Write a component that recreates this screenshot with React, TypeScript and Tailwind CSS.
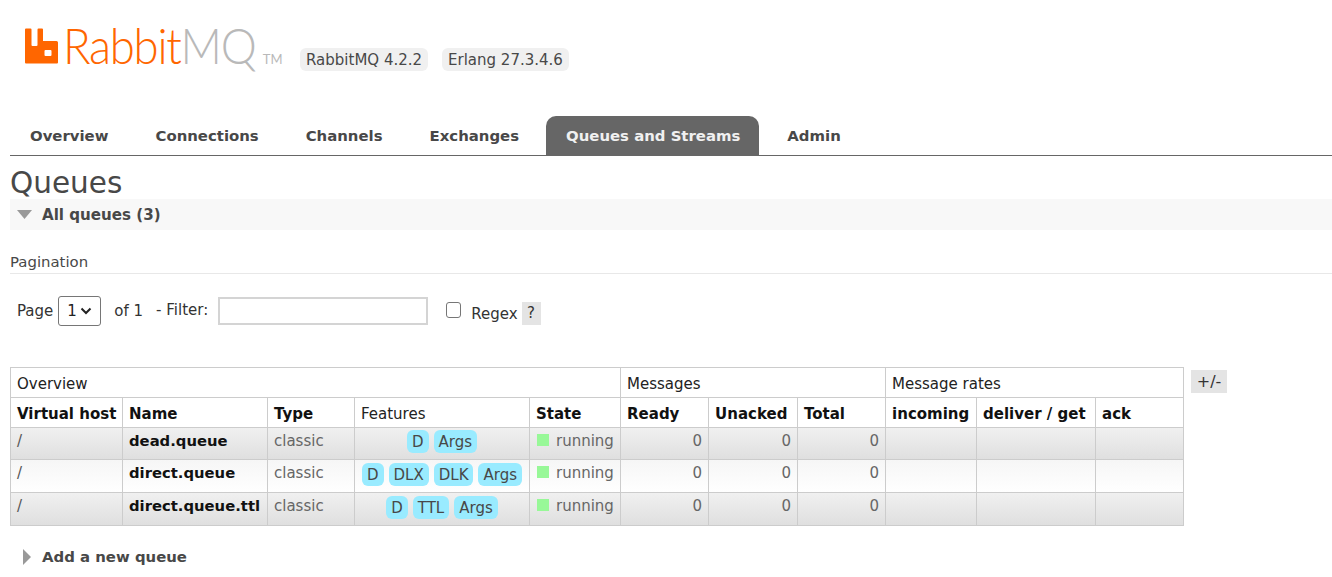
const F = "font-['DejaVu_Sans',Verdana,sans-serif]";

function Logo() {
  return (
    <div className="flex w-[300px] shrink-0 items-start">
      <svg width="33" height="36" viewBox="0 0 33 36" className="mt-[28px] ml-[25px]">
        <path fill="#ff6600" fillRule="evenodd" d="M1 .5h4.5a1 1 0 0 1 1 1V17a1 1 0 0 0 1 1h4a1 1 0 0 0 1-1V1.5a1 1 0 0 1 1-1H17a1 1 0 0 1 1 1V13h13.5a1.5 1.5 0 0 1 1.5 1.5V34.5a1 1 0 0 1-1 1H1a1 1 0 0 1-1-1V1.5a1 1 0 0 1 1-1zM20.5 22a1 1 0 0 0-1 1v4a1 1 0 0 0 1 1h5a1 1 0 0 0 1-1v-4a1 1 0 0 0-1-1z" />
      </svg>
      <div className="ml-[5px] mt-[17px] flex h-[56px] origin-left scale-x-[0.93] items-baseline font-['Lato',sans-serif] text-[49px] leading-[56px] font-light tracking-[-1.4px] whitespace-nowrap">
        <span className="text-[#ff6600]">Rabbit</span>
        <span className="text-[#b9b9b9]">MQ</span>
        <span className="ml-[8px] text-[14px] font-normal tracking-normal text-[#b9b9b9]">TM</span>
      </div>
    </div>
  );
}

function Pill({ children }: { children: React.ReactNode }) {
  return <span className="h-[23px] rounded-[6px] bg-[#f0f0f0] px-[6px] pt-[1px] text-[15px] leading-[22px] text-[#484848]">{children}</span>;
}

function Tab({ label, active, className = "" }: { label: string; active?: boolean; className?: string }) {
  return (
    <div className={`flex h-[39px] items-center rounded-t-[10px] pt-[1px] pl-[20px] text-[14.9px] font-bold ${active ? "bg-[#666666] pr-[19px] text-[#f0f0f0]" : "pr-[20px] text-[#484848]"} ${className}`}>
      {label}
    </div>
  );
}

function Tag({ children }: { children: React.ReactNode }) {
  return <span className="inline-block h-[23px] rounded-[6px] bg-[#99ebff] px-[5px] pt-[1px] text-[15px] leading-[22px] text-[#484848]">{children}</span>;
}

const widths = [112, 145, 87, 175, 91, 88, 89, 88, 91, 119, 88];
const heads = ["Virtual host", "Name", "Type", "Features", "State", "Ready", "Unacked", "Total", "incoming", "deliver / get", "ack"];
const rows = [
  { name: "dead.queue", tags: ["D", "Args"], h: "h-[32px]", odd: true, pad: "pt-[2px]" },
  { name: "direct.queue", tags: ["D", "DLX", "DLK", "Args"], h: "h-[33px]", odd: false, pad: "pt-[3px]" },
  { name: "direct.queue.ttl", tags: ["D", "TTL", "Args"], h: "h-[33px]", odd: true, pad: "pt-[3px]" },
];
const cell = "border border-[#cccccc] px-[6px]";
const body = `${cell} align-top pt-[2px]`;

export default function App() {
  return (
    <div className={`${F} h-[577px] w-[1332px] overflow-hidden bg-white text-[15px] text-[#484848]`}>
      <div className="flex h-[116px] items-start">
        <Logo />
        <div className="mt-[48px] flex gap-[14px]">
          <Pill>RabbitMQ 4.2.2</Pill>
          <Pill>Erlang 27.3.4.6</Pill>
        </div>
      </div>
      <div className="ml-[10px] flex h-[40px] border-b border-[#666666]">
        <Tab label="Overview" />
        <Tab label="Connections" className="ml-[7px]" />
        <Tab label="Channels" className="ml-[7px]" />
        <Tab label="Exchanges" className="ml-[7px]" />
        <Tab label="Queues and Streams" active className="ml-[7px]" />
        <Tab label="Admin" className="ml-[8px]" />
      </div>
      <div className="ml-[10px]">
        <h1 className="h-[43px] text-[29.5px] leading-[55px] text-[#484848]">Queues</h1>
        <div className="flex h-[31px] items-center bg-[#f8f8f8] pl-[7px] pt-[1px] text-[15.1px] font-bold">
          <svg width="16" height="10" viewBox="0 0 16 10" className="mr-[9px]"><path d="M0 0h15L7.5 9z" fill="#999999" /></svg>
          All queues (3)
        </div>
        <div className="mt-[21px] h-[23px] border-b border-[#e8e8e8] text-[14.9px] leading-[22px]">Pagination</div>
        <div className="flex h-[93px] items-start pl-[7px] pt-[22px] text-[15px] text-[#333333]">
          <span className="mt-[4px]">Page</span>
          <div className="ml-[5px] flex h-[30px] w-[43px] items-center justify-between rounded-[3px] border border-[#767676] px-[8px] text-[#222222]">
            1
            <svg width="12" height="8" viewBox="0 0 12 8"><path d="M1.5 1.5 6 6l4.5-4.5" fill="none" stroke="#222222" strokeWidth="2" /></svg>
          </div>
          <span className="ml-[13px] mt-[4px]">of 1</span>
          <span className="ml-[13px] mt-[3px]">- Filter:</span>
          <div className="ml-[10px] mt-[1px] h-[28px] w-[210px] border-2 border-[#d4d4d4]" />
          <div className="ml-[18px] mt-[6px] h-[16px] w-[15px] rounded-[3px] border border-[#767676]" />
          <span className="ml-[10px] mt-[7px]">Regex</span>
          <span className="ml-[4px] mt-[6px] flex h-[23px] w-[19px] items-center justify-center bg-[#e4e4e4]">?</span>
        </div>
        <div className="flex items-start">
          <table className="w-[1174px] table-fixed border-collapse text-[15px]">
            <colgroup>
              {widths.map((w, i) => <col key={i} style={{ width: w }} />)}
            </colgroup>
            <thead>
              <tr className="h-[30px] text-[#222222]">
                <th colSpan={5} className={`${cell} pt-[3px] text-left font-normal`}>Overview</th>
                <th colSpan={3} className={`${cell} pt-[3px] text-left font-normal`}>Messages</th>
                <th colSpan={3} className={`${cell} pt-[3px] text-left font-normal`}>Message rates</th>
              </tr>
              <tr className="h-[30px] text-[#111111]">
                {heads.map((h) => (
                  <th key={h} className={`${cell} pt-[3px] text-left whitespace-nowrap ${h === "Features" ? "font-normal text-[#222222]" : "font-bold"}`}>{h}</th>
                ))}
              </tr>
            </thead>
            <tbody>
              {rows.map((r) => (
                <tr key={r.name} className={`${r.h} ${r.odd ? "bg-gradient-to-b from-[#f0f0f0] to-[#dfdfdf]" : "bg-gradient-to-b from-[#f6f6f6] to-[#ffffff]"}`}>
                  <td className={`${body} text-[#555555]`}>/</td>
                  <td className={`${body} text-[14.8px] font-bold text-[#111111] whitespace-nowrap`}>{r.name}</td>
                  <td className={`${body} text-[#666666]`}>classic</td>
                  <td className={`${cell} align-top ${r.pad} text-center whitespace-nowrap`}>
                    <div className="flex justify-center gap-[5px]">{r.tags.map((t) => <Tag key={t}>{t}</Tag>)}</div>
                  </td>
                  <td className={`${body} text-[#666666] whitespace-nowrap`}>
                    <span className="mr-[7px] ml-[1px] inline-block h-[12px] w-[12px] bg-[#98f898]" />running
                  </td>
                  <td className={`${body} text-right text-[#666666]`}>0</td>
                  <td className={`${body} text-right text-[#666666]`}>0</td>
                  <td className={`${body} text-right text-[#666666]`}>0</td>
                  <td className={cell} />
                  <td className={cell} />
                  <td className={cell} />
                </tr>
              ))}
            </tbody>
          </table>
          <span className="ml-[7px] mt-[3px] flex h-[23px] w-[36px] items-center justify-center bg-[#e4e4e4] text-[16px] text-[#333333]">+/-</span>
        </div>
        <div className="mt-[20px] flex items-center pl-[12px] text-[14.9px] font-bold leading-[22px]">
          <svg width="10" height="16" viewBox="0 0 10 16" className="mr-[10px]"><path d="M1 0v16l8-8z" fill="#999999" /></svg>
          Add a new queue
        </div>
      </div>
    </div>
  );
}
